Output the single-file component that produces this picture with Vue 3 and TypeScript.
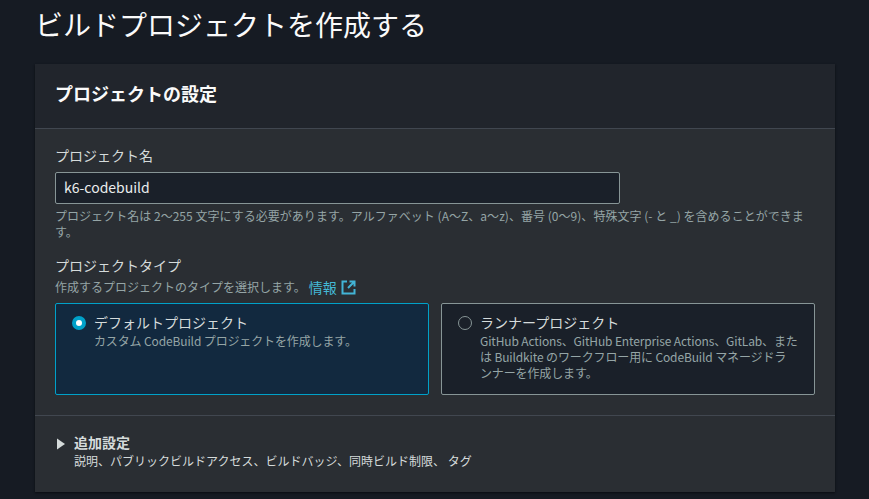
<script setup lang="ts">
const hint = 'プロジェクト名は 2〜255 文字にする必要があります。アルファベット (A〜Z、a〜z)、番号 (0〜9)、特殊文字 (- と _) を含めることができます。'
const options = [
  { id: 'default', title: 'デフォルトプロジェクト', desc: 'カスタム CodeBuild プロジェクトを作成します。', selected: true },
  { id: 'runner', title: 'ランナープロジェクト', desc: 'GitHub Actions、GitHub Enterprise Actions、GitLab、また\nは Buildkite のワークフロー用に CodeBuild マネージドラ\nンナーを作成します。', selected: false }
]
</script>

<template>
  <div class="page">
    <h1 class="title">ビルドプロジェクトを作成する</h1>
    <section class="card">
      <header class="card-head"><h2>プロジェクトの設定</h2></header>
      <div class="card-body">
        <label class="label">プロジェクト名</label>
        <input class="input" value="k6-codebuild" />
        <p class="hint">{{ hint }}</p>
        <div class="label type-label">プロジェクトタイプ</div>
        <p class="desc">
          作成するプロジェクトのタイプを選択します。
          <a class="info">情報
            <svg width="15" height="15" viewBox="0 0 15 15" fill="none" stroke="#42b4d6" stroke-width="2">
              <path d="M6 1.5H1.500v12h12V9" />
              <path d="M8.500 1.500h5V6.500M13 2 7 8" />
            </svg>
          </a>
        </p>
        <div class="tiles">
          <div v-for="o in options" :key="o.id" class="tile" :class="{ selected: o.selected }">
            <span class="radio"></span>
            <div class="tile-text">
              <div class="tile-title">{{ o.title }}</div>
              <div class="tile-desc">{{ o.desc }}</div>
            </div>
          </div>
        </div>
      </div>
      <div class="extra">
        <svg class="caret" width="10" height="12" viewBox="0 0 10 12"><path d="M1 .5l8 5.500-8 5.500z" fill="#d5dbdb" /></svg>
        <div>
          <div class="extra-title">追加設定</div>
          <div class="extra-desc">説明、パブリックビルドアクセス、ビルドバッジ、同時ビルド制限、 タグ</div>
        </div>
      </div>
    </section>
  </div>
</template>

<style>
html, body { margin: 0; background: #161b23; }
</style>

<style scoped>
.page {
  width: 869px;
  height: 499px;
  box-sizing: border-box;
  padding: 0 34px 0 35px;
  overflow: hidden;
  background: #161b23;
  font-family: "Noto Sans CJK JP", "Noto Sans", sans-serif;
  color: #d5dbdb;
}
.title {
  margin: 0;
  height: 64px;
  padding-top: 5px;
  box-sizing: border-box;
  font-size: 28px;
  line-height: 38px;
  font-weight: 400;
  color: #fafafa;
}
.card {
  background: #2a2e33;
  height: 428px;
  display: flex;
  flex-direction: column;
  box-shadow: 0 1px 2px #0a0d12;
}
.card-head {
  height: 65px;
  box-sizing: border-box;
  background: #21252c;
  border-bottom: 1px solid #414750;
  padding: 17px 20px 0;
}
.card-head h2 {
  margin: 0;
  font-size: 18px;
  line-height: 24px;
  font-weight: 700;
  color: #fafafa;
}
.card-body {
  height: 287px;
  box-sizing: border-box;
  padding: 16px 20px 0;
  border-bottom: 1px solid #414750;
}
.label {
  display: block;
  font-size: 14px;
  line-height: 20px;
  color: #d5dbdb;
}
.input {
  display: block;
  margin-top: 7px;
  width: 565px;
  height: 32px;
  box-sizing: border-box;
  padding: 0 8px 2px;
  background: #1a2029;
  border: 1px solid #879596;
  border-radius: 2px;
  color: #eaeded;
  font: 14px/20px "Noto Sans CJK JP", "Noto Sans", sans-serif;
  outline: none;
}
.hint {
  margin: 4px 0 0;
  font-size: 12px;
  line-height: 16px;
  letter-spacing: 0.03px;
  color: #95a5a6;
}
.type-label { margin-top: 15px; }
.desc {
  margin: 3px 0 0;
  font-size: 12px;
  line-height: 18px;
  color: #95a5a6;
  display: flex;
  align-items: center;
  gap: 3px;
}
.info {
  display: inline-flex;
  align-items: center;
  gap: 4px;
  font-size: 14px;
  color: #44b9d6;
}
.tiles {
  display: flex;
  gap: 12px;
  margin-top: 7px;
}
.tile {
  flex: 1;
  height: 92px;
  box-sizing: border-box;
  padding: 8px 14px 8px 16px;
  display: flex;
  gap: 8px;
  background: #1a2029;
  border: 1px solid #879596;
  border-radius: 2px;
}
.tile.selected {
  background: #12293f;
  border-color: #00a1c9;
}
.radio {
  flex: none;
  width: 14px;
  height: 14px;
  margin-top: 4px;
  box-sizing: border-box;
  border: 1px solid #879596;
  border-radius: 50%;
}
.selected .radio {
  border: 4px solid #00a1c9;
  background: #fff;
}
.tile-title {
  font-size: 14px;
  line-height: 20px;
  color: #d5dbdb;
}
.tile-desc {
  margin-top: 1px;
  font-size: 12px;
  line-height: 16px;
  letter-spacing: -0.13px;
  white-space: pre-line;
  color: #95a5a6;
}
.extra {
  display: flex;
  gap: 8px;
  padding: 16px 20px 0 21px;
}
.caret { margin-top: 6px; }
.extra-title {
  font-size: 14px;
  line-height: 20px;
  font-weight: 700;
  color: #d5dbdb;
}
.extra-desc {
  margin-top: 1px;
  font-size: 12px;
  line-height: 16px;
  color: #d5dbdb;
}
</style>
